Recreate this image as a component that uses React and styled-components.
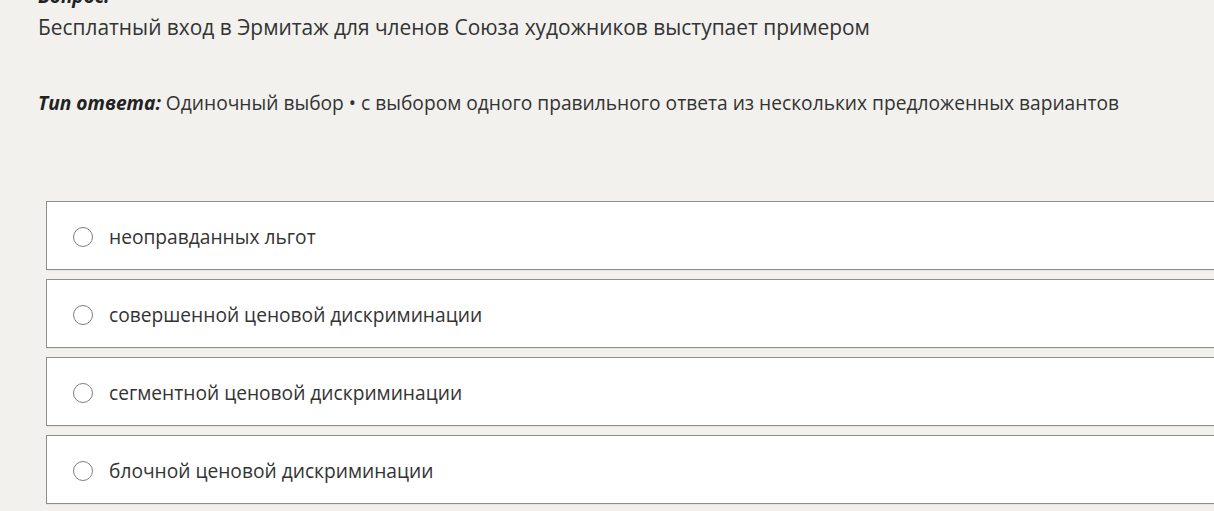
import React from "react";
import styled, { createGlobalStyle } from "styled-components";

const Global = createGlobalStyle`
  html, body { margin: 0; padding: 0; background: #f2f1ee; overflow: hidden; }
  body { font-family: "Open Sans", "Noto Sans", sans-serif; color: #333; }
`;

const Page = styled.div`
  width: 1214px;
  height: 511px;
  overflow: hidden;
  padding-left: 38px;
  box-sizing: border-box;
`;

const Label = styled.div`
  font-style: italic;
  font-weight: 700;
  font-size: 19px;
  line-height: 24px;
  margin-top: -16px;
  color: #222;
`;

const Question = styled.div`
  font-size: 20.9px;
  line-height: 30px;
  margin-top: 4px;
`;

const AnswerType = styled.div`
  font-size: 19.2px;
  line-height: 30px;
  margin-top: 46px;
  & b { font-style: italic; font-weight: 700; color: #222; }
`;

const Options = styled.div`
  display: flex;
  flex-direction: column;
  gap: 9px;
  margin-top: 83px;
  margin-left: 8px;
  width: 1300px;
`;

const Option = styled.label`
  display: flex;
  align-items: center;
  gap: 16px;
  height: 69px;
  box-sizing: border-box;
  padding: 2px 0 0 26px;
  background: #fff;
  border: 1px solid #8e8e8e;
  box-shadow: 0 1px 0 #e4e4e4, 1px 0 0 #e4e4e4;
  font-size: 19.2px;
  cursor: pointer;
`;

const Radio = styled.span`
  width: 20px;
  height: 20px;
  border: 1.5px solid #7f7f7f;
  border-radius: 50%;
  box-sizing: border-box;
  flex: none;
`;

const items = [
  "неоправданных льгот",
  "совершенной ценовой дискриминации",
  "сегментной ценовой дискриминации",
  "блочной ценовой дискриминации",
];

export default function App() {
  return (
    <Page>
      <Global />
      <Label>Вопрос:</Label>
      <Question>Бесплатный вход в Эрмитаж для членов Союза художников выступает примером</Question>
      <AnswerType>
        <b>Тип ответа:</b> Одиночный выбор • с выбором одного правильного ответа из нескольких предложенных вариантов
      </AnswerType>
      <Options>
        {items.map((t) => (
          <Option key={t}>
            <Radio />
            <span>{t}</span>
          </Option>
        ))}
      </Options>
    </Page>
  );
}
